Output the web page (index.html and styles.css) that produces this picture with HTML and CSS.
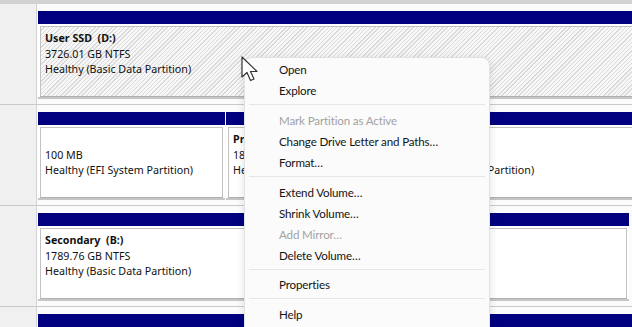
FILE: index.html
```html
<!DOCTYPE html>
<html lang="en">
<head>
    <meta charset="UTF-8">
    <title>Disk Management</title>
    <link rel="stylesheet" href="styles.css">
</head>
<body>
    <div id="pane">
        <div class="disk">
            <div class="disk-label"></div>
            <div class="parts">
                <div class="part part-full">
                    <div class="part-bar"></div>
                    <div class="part-body">
                        <div class="part-frame selected">
                            <b>User SSD&nbsp; (D:)</b>
                            <span>3726.01 GB NTFS</span>
                            <span>Healthy (Basic Data Partition)</span>
                        </div>
                    </div>
                </div>
            </div>
        </div>

        <div class="disk">
            <div class="disk-label"></div>
            <div class="parts">
                <div class="part part-efi">
                    <div class="part-bar"></div>
                    <div class="part-body">
                        <div class="part-frame">
                            <b>&nbsp;</b>
                            <span>100 MB</span>
                            <span>Healthy (EFI System Partition)</span>
                        </div>
                    </div>
                </div>
                <div class="part part-os">
                    <div class="part-bar"></div>
                    <div class="part-body">
                        <div class="part-frame">
                            <b>Primary&nbsp; (C:)</b>
                            <span>1862.92 GB NTFS</span>
                            <span>Healthy (Boot, Page File, Crash Dump)</span>
                        </div>
                    </div>
                </div>
                <div class="part part-rest">
                    <div class="part-bar"></div>
                    <div class="part-body">
                        <div class="part-frame">
                            <b>Data</b>
                            <span>1.95 GB NTFS</span>
                            <span>Healthy (Basic Data Partition)</span>
                        </div>
                    </div>
                </div>
            </div>
        </div>

        <div class="disk">
            <div class="disk-label"></div>
            <div class="parts">
                <div class="part part-second">
                    <div class="part-bar"></div>
                    <div class="part-body">
                        <div class="part-frame">
                            <b>Secondary&nbsp; (B:)</b>
                            <span>1789.76 GB NTFS</span>
                            <span>Healthy (Basic Data Partition)</span>
                        </div>
                    </div>
                </div>
            </div>
        </div>

        <div class="disk">
            <div class="disk-label"></div>
            <div class="parts">
                <div class="part part-full">
                    <div class="part-bar"></div>
                </div>
            </div>
        </div>
    </div>

    <div id="menu">
        <div class="item">Open</div>
        <div class="item">Explore</div>
        <div class="sep"></div>
        <div class="item disabled">Mark Partition as Active</div>
        <div class="item">Change Drive Letter and Paths…</div>
        <div class="item">Format…</div>
        <div class="sep"></div>
        <div class="item">Extend Volume…</div>
        <div class="item">Shrink Volume…</div>
        <div class="item disabled">Add Mirror…</div>
        <div class="item">Delete Volume…</div>
        <div class="sep"></div>
        <div class="item">Properties</div>
        <div class="sep"></div>
        <div class="item">Help</div>
    </div>

    <svg id="cursor" width="20" height="28" viewBox="0 0 20 28">
        <path d="M1 1 L1 21 L6 16.5 L9.5 24.5 L13 23 L9.5 15.5 L16 15.5 Z" fill="#fff" stroke="#333" stroke-width="1.2" stroke-linejoin="round"/>
    </svg>
</body>
</html>
```

FILE: styles.css
```css
body {
    margin: 0;
    width: 632px;
    height: 327px;
    overflow: hidden;
    position: relative;
    background-color: #fbfbfb;
    font-family: "Segoe UI", "Noto Sans", Arial, sans-serif;
}

#pane {
    border-top: 4px solid #d2d2d2;
}

.disk {
    display: flex;
    height: 100px;
    border-bottom: 1px solid #c9c9c9;
}

.disk-label {
    width: 36px;
    flex: none;
    background-color: #f0f0f0;
    border-right: 1px solid #d4d4d4;
}

.parts {
    flex: 1;
    display: flex;
    padding-left: 1px;
    overflow: hidden;
}

.part {
    flex: none;
    padding: 7px 1px 5px 0;
    display: flex;
    flex-direction: column;
}

.part-full { width: 600px; }
.part-efi { width: 187px; }
.part-os { width: 154px; }
.part-rest { width: 260px; }
.part-second { width: 591px; }

.part-bar {
    height: 13px;
    background-color: #01017f;
    flex: none;
}

.part-body {
    flex: 1;
    padding: 2px 2px 0 2px;
    display: flex;
    border-bottom: 2px solid #c6c6c6;
    background-color: #fff;
}

.part-frame {
    flex: 1;
    border: 1px solid #c2c2c2;
    border-bottom-color: #b0b0b0;
    padding: 4px 0 0 4px;
    font-size: 10.7px;
    line-height: 15.5px;
    color: #111;
    overflow: hidden;
    white-space: nowrap;
}

.part-frame b,
.part-frame span {
    display: block;
}

.part-frame.selected {
    background: repeating-linear-gradient(135deg, #f7f7f7 0, #f7f7f7 2px, #dadada 2px, #dadada 3px);
}

#menu {
    position: absolute;
    left: 244px;
    top: 57px;
    width: 246px;
    height: 290px;
    background-color: #fbfbfb;
    border: 1px solid #e2e2e2;
    border-radius: 8px;
    box-shadow: 0 2px 8px rgba(0, 0, 0, 0.12);
    padding-top: 1px;
    box-sizing: border-box;
    font-family: Lato, "Noto Sans", Arial, sans-serif;
    font-size: 11.6px;
    letter-spacing: -0.15px;
    color: #141414;
}

.item {
    height: 21px;
    line-height: 21px;
    padding-left: 34px;
}

.item.disabled {
    color: #a2a2a2;
}

.sep {
    height: 1px;
    margin: 3px 4px 4.75px;
    background-color: #e6e6e6;
}

#cursor {
    position: absolute;
    left: 241px;
    top: 56px;
}
```
